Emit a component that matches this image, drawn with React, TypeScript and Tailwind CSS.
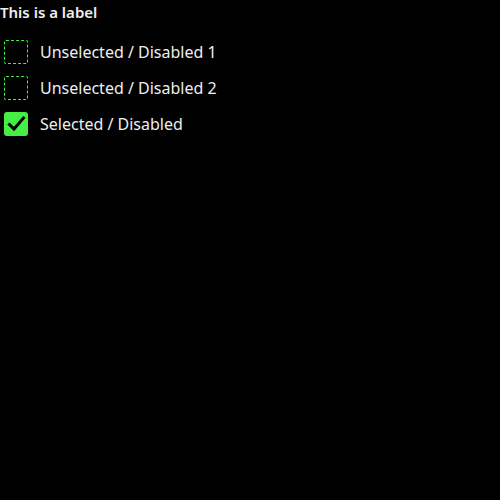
import React from "react";

function Box({ checked }: { checked?: boolean }) {
  if (checked) {
    return (
      <div className="w-6 h-6 rounded-[3px] bg-[#44ee44] flex items-center justify-center shrink-0">
        <svg width="20" height="20" viewBox="0 0 20 20">
          <path d="M3.5 10.5 L8 15 L17.5 4" fill="none" stroke="#000" strokeWidth="3" strokeLinecap="square" />
        </svg>
      </div>
    );
  }
  return <div className="w-6 h-6 border border-dashed border-[#44ee44] rounded-[2px] shrink-0" />;
}

export default function App() {
  const items = [
    { label: "Unselected / Disabled 1", checked: false },
    { label: "Unselected / Disabled 2", checked: false },
    { label: "Selected / Disabled", checked: true },
  ];
  return (
    <div className="w-[500px] h-[500px] bg-black text-[#eeeeee]" style={{ fontFamily: '"Noto Sans", "Open Sans", sans-serif' }}>
      <div className="text-[15px] font-semibold leading-6">This is a label</div>
      <div className="flex flex-col mt-[10px]">
        {items.map((it) => (
          <div key={it.label} className="flex items-center h-9 pl-1 gap-3">
            <Box checked={it.checked} />
            <span className="text-[16px] leading-6">{it.label}</span>
          </div>
        ))}
      </div>
    </div>
  );
}
